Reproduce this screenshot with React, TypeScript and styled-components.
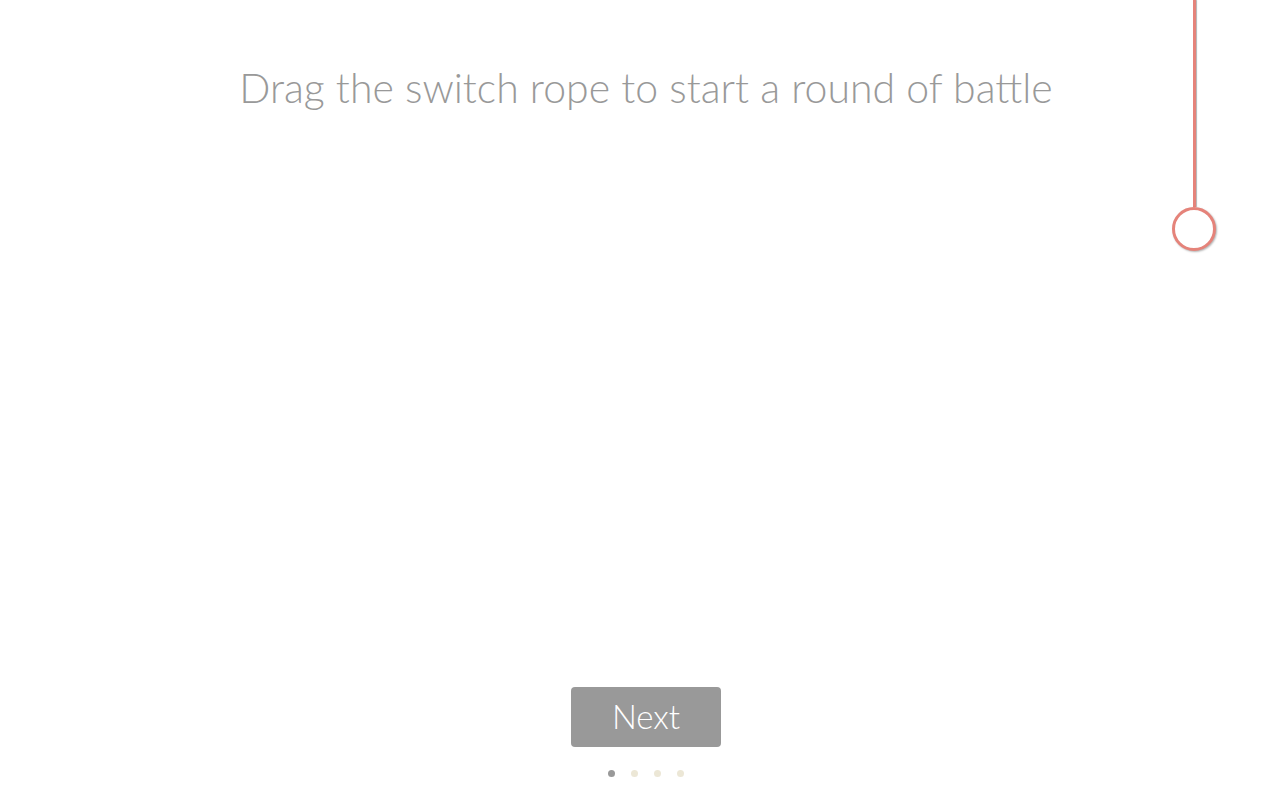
import React from "react";
import styled, { createGlobalStyle } from "styled-components";

const Global = createGlobalStyle`
  html, body { margin: 0; padding: 0; background: #fff; }
  body { font-family: Lato, "Open Sans", sans-serif; }
`;

const Page = styled.div`
  position: relative;
  width: 1280px;
  height: 800px;
  overflow: hidden;
  box-sizing: border-box;
  padding-left: 12px;
  display: flex;
  flex-direction: column;
  align-items: center;
`;

const Title = styled.h1`
  margin: 63px 0 0;
  font-family: Lato, sans-serif;
  font-weight: 300;
  font-size: 41px;
  line-height: 50px;
  color: #999;
  letter-spacing: 0;
`;

const Spacer = styled.div`
  flex: 1;
`;

const NextButton = styled.button`
  width: 150px;
  height: 60px;
  border: none;
  border-radius: 4px;
  background: #999;
  color: #fff;
  font-family: Lato, sans-serif;
  font-weight: 300;
  font-size: 33px;
  padding: 0 0 3px;
  cursor: pointer;
`;

const Dots = styled.div`
  display: flex;
  gap: 16px;
  margin: 23px 0 23px;
`;

const Dot = styled.span<{ $active?: boolean }>`
  width: 7px;
  height: 7px;
  border-radius: 50%;
  background: ${(p) => (p.$active ? "#999" : "#ece7d6")};
`;

const Rope = styled.div`
  position: absolute;
  left: 1172px;
  top: 0;
  width: 44px;
  display: flex;
  flex-direction: column;
  align-items: center;
`;

const Cord = styled.div`
  width: 3px;
  height: 207px;
  background: #e5837a;
  box-shadow: 1px 0 1px rgba(0, 0, 0, 0.3);
`;

const Handle = styled.div`
  width: 44px;
  height: 44px;
  box-sizing: border-box;
  border-radius: 50%;
  border: 3px solid #e5837a;
  background: #fff;
  box-shadow: 1px 1px 2px rgba(0, 0, 0, 0.3);
`;

export default function App() {
  return (
    <>
      <Global />
      <Page>
        <Title>Drag the switch rope to start a round of battle</Title>
        <Spacer />
        <NextButton>Next</NextButton>
        <Dots>
          <Dot $active />
          <Dot />
          <Dot />
          <Dot />
        </Dots>
        <Rope>
          <Cord />
          <Handle />
        </Rope>
      </Page>
    </>
  );
}
